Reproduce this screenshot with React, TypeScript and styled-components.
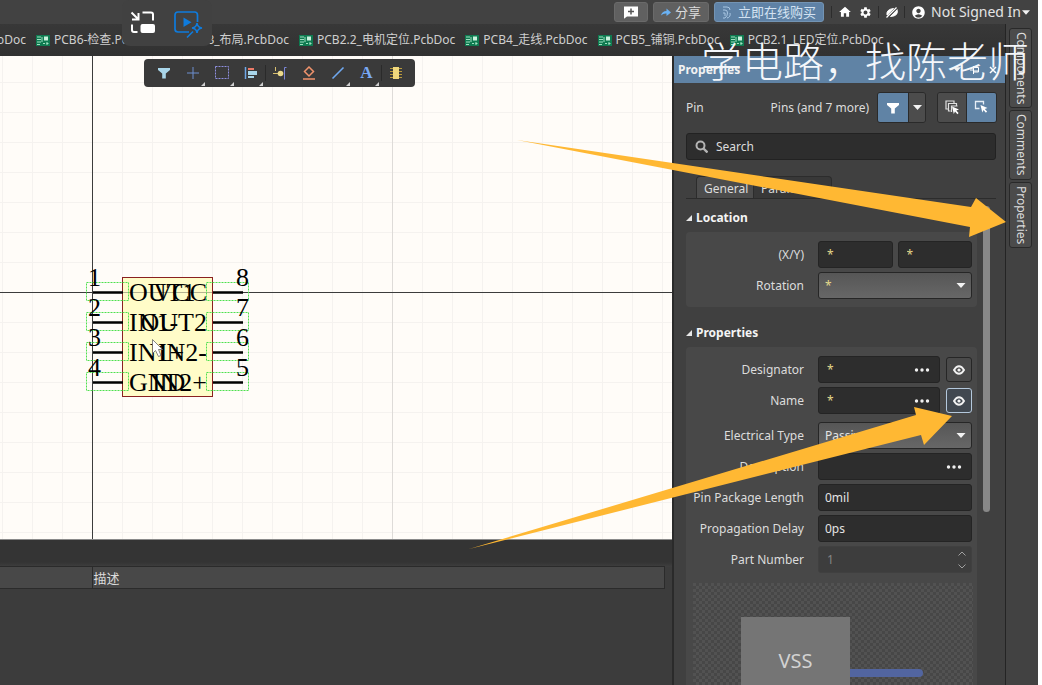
import React from "react";
import styled, { createGlobalStyle, css } from "styled-components";
import { MdHome, MdSettings, MdAccountCircle } from "react-icons/md";

const Global = createGlobalStyle`
  * { box-sizing: border-box; }
  body { margin: 0; background: #fff; }
  body, button, input, select {
    font-family: "Noto Sans", "Noto Sans CJK SC", sans-serif;
    font-size: 12px;
    line-height: 16px;
    color: #dcdcdc;
  }
  button { cursor: pointer; }
`;

/* ---------- window ---------- */

const Window = styled.div`
  position: relative;
  display: flex;
  flex-direction: column;
  height: 100vh;
  overflow: hidden;
  border-right: 4px solid #fff;
  background: #3f3f3f;
`;

const TitleBar = styled.header`
  display: flex;
  flex: none;
  justify-content: flex-end;
  align-items: center;
  gap: 5px;
  height: 24px;
  padding-right: 8px;
  background: #424242;
`;

const TitleButton = styled.button<{ $accent?: boolean }>`
  display: flex;
  align-items: center;
  justify-content: center;
  gap: 4px;
  height: 20px;
  padding: 0 7px;
  border: 1px solid ${(p) => (p.$accent ? "#7394b4" : "#6a6a6a")};
  border-radius: 3px;
  background: ${(p) => (p.$accent ? "#5f82a6" : "#606060")};
  color: ${(p) => (p.$accent ? "#d3e2f2" : "#dcdcdc")};
  font-size: 13px;
  white-space: nowrap;
`;

const CommentButton = styled(TitleButton)`
  width: 34px;
`;

const TitleTools = styled.div`
  display: flex;
  align-items: center;
  height: 20px;
`;

const TitleTool = styled.button`
  display: grid;
  place-items: center;
  width: 21px;
  height: 20px;
  padding: 0;
  border: 0;
  background: none;
  color: #fff;
`;

const TitleDivider = styled.span`
  width: 1px;
  height: 12px;
  margin: 0 2px;
  background: #2c2c2c;
`;

const Account = styled.button`
  display: flex;
  align-items: center;
  gap: 5px;
  padding: 0 0 0 4px;
  border: 0;
  background: none;
  font-size: 14px;
  color: #e4e4e4;
  white-space: nowrap;
`;

const AccountName = styled.span`
  display: flex;
  align-items: center;
  gap: 1px;
`;

const Workspace = styled.div`
  display: flex;
  flex: 1;
  min-height: 0;
`;

const Desk = styled.div`
  display: flex;
  flex: 1;
  flex-direction: column;
  min-width: 0;
`;

const DocTabs = styled.nav`
  display: flex;
  flex: none;
  align-items: center;
  gap: 10px;
  height: 32px;
  overflow: hidden;
  background: linear-gradient(#383838, #313131);
`;

const DocTab = styled.button<{ $cut?: boolean }>`
  display: flex;
  flex: none;
  align-items: center;
  gap: 4px;
  padding: 0;
  border: 0;
  background: none;
  color: #cfcfcf;
  white-space: nowrap;
  ${(p) =>
    p.$cut &&
    css`
      width: 26px;
      justify-content: flex-end;
      overflow: hidden;
    `}
`;

const DeskBody = styled.div`
  display: flex;
  flex: 1;
  min-height: 0;
`;

const Editor = styled.main`
  display: flex;
  flex: 1;
  flex-direction: column;
  min-width: 0;
`;

/* ---------- schematic ---------- */

const Sheet = styled.section`
  position: relative;
  flex: 1;
  min-height: 0;
  overflow: hidden;
  background: #fffcf8;
`;

const Drawing = styled.svg`
  display: block;
  width: 100%;
  height: 100%;
`;

const ToolStrip = styled.div`
  position: absolute;
  top: 3px;
  left: 144px;
  display: flex;
  height: 28px;
  padding: 0 5px;
  border-radius: 4px;
  background: #3a3a3a;
`;

const Tool = styled.button<{ $menu?: boolean; $ruled?: boolean }>`
  position: relative;
  display: grid;
  place-items: center;
  width: 29px;
  height: 28px;
  padding: 0;
  border: 0;
  background: none;
  ${(p) =>
    p.$ruled &&
    css`
      &::before {
        content: "";
        position: absolute;
        left: 0;
        top: 6px;
        width: 1px;
        height: 16px;
        background: #2a2a2a;
      }
    `}
  ${(p) =>
    p.$menu &&
    css`
      &::after {
        content: "";
        position: absolute;
        right: 2px;
        bottom: 1px;
        border: 2px solid transparent;
        border-right-color: #d0d0d0;
        border-bottom-color: #d0d0d0;
      }
    `}
`;

/* ---------- lower pane ---------- */

const LowerPane = styled.section`
  flex: none;
  height: 146px;
  padding: 26px 7px 0 0;
  background: linear-gradient(#343434 0 22px, #3f3f3f 27px, #3c3c3c 27px);
  border-top: 1px solid #8a8a8a;
`;

const ResultTable = styled.table`
  width: 100%;
  border-collapse: collapse;
  table-layout: fixed;
`;

const HeadCell = styled.th<{ $width?: number }>`
  width: ${(p) => (p.$width ? `${p.$width}px` : "auto")};
  height: 22px;
  padding: 0 1px;
  border: 1px solid #2b2b2b;
  border-left: 0;
  background: #484848;
  font-size: 13px;
  font-weight: 400;
  text-align: left;
`;

/* ---------- properties panel ---------- */

const Panel = styled.aside`
  display: flex;
  flex: none;
  flex-direction: column;
  width: 333px;
  overflow: hidden;
  border-left: 2px solid #2a2a2a;
  background: #404040;
`;

const PanelTitle = styled.header`
  display: flex;
  flex: none;
  align-items: center;
  justify-content: space-between;
  height: 27px;
  padding: 0 6px 0 4px;
  background: #6083a5;
`;

const PanelName = styled.h1`
  margin: 0;
  font-size: 12px;
  font-weight: 700;
  color: #f2f2f2;
`;

const PanelControls = styled.div`
  display: flex;
  gap: 6px;
`;

const PanelControl = styled.button`
  display: grid;
  place-items: center;
  width: 12px;
  height: 12px;
  padding: 0;
  border: 0;
  background: none;
  color: #fff;
`;

const FilterRow = styled.div`
  display: flex;
  flex: none;
  align-items: center;
  margin: 9px 8px 0 12px;
`;

const Scope = styled.span`
  flex: 1;
`;

const ButtonPair = styled.div`
  display: flex;
  height: 31px;
  margin-left: 8px;
  overflow: hidden;
  border: 1px solid #2a2a2a;
  border-radius: 3px;
  & + & {
    margin-left: 11px;
  }
`;

const PairButton = styled.button<{ $on?: boolean; $narrow?: boolean }>`
  display: grid;
  place-items: center;
  width: ${(p) => (p.$narrow ? 17 : p.$on ? 30 : 28)}px;
  padding: 0;
  border: 0;
  background: ${(p) => (p.$on ? "#6083a5" : "#4c4c4c")};
  & + & {
    border-left: 1px solid #2a2a2a;
  }
`;

const SearchBox = styled.label`
  display: flex;
  flex: none;
  align-items: center;
  gap: 8px;
  height: 27px;
  margin: 10px 9px 0 12px;
  padding: 0 8px;
  border: 1px solid #222;
  border-radius: 3px;
  background: #2d2d2d;
`;

const SearchInput = styled.input`
  flex: 1;
  min-width: 0;
  padding: 0;
  border: 0;
  outline: 0;
  background: none;
  &::placeholder {
    color: #dcdcdc;
    opacity: 1;
  }
`;

const PageTabs = styled.div`
  display: flex;
  flex: none;
  height: 23px;
  margin: 16px 9px 0 12px;
  padding-left: 10px;
  border-bottom: 1px solid #2c2c2c;
`;

const PageTab = styled.button<{ $active?: boolean }>`
  width: ${(p) => (p.$active ? 58 : 78)}px;
  padding: 2px 7px 0;
  border: 1px solid #2c2c2c;
  border-bottom: 0;
  border-radius: ${(p) => (p.$active ? "4px 0 0 0" : "0 4px 0 0")};
  background: ${(p) => (p.$active ? "#4c4c4c" : "#383838")};
  text-align: left;
  & + & {
    border-left: 0;
  }
`;

const ScrollArea = styled.div`
  display: flex;
  flex: 1;
  gap: 6px;
  min-height: 0;
  padding: 0 15px 0 12px;
`;

const Sections = styled.div`
  flex: 1;
  min-width: 0;
`;

const ScrollThumb = styled.div`
  width: 7px;
  height: 306px;
  margin-top: 7px;
  border-radius: 4px;
  background: #888;
`;

const SectionTitle = styled.h2`
  display: flex;
  align-items: center;
  gap: 4px;
  height: 16px;
  margin: 11px 0 6px;
  font-size: 12px;
  font-weight: 700;
  color: #f4f4f4;
`;

const Group = styled.div`
  display: flex;
  flex-direction: column;
  gap: 4px;
  padding: 9px 5px 8px 0;
  margin-bottom: 18px;
  border-radius: 4px;
  background: #484848;
`;

const Row = styled.div<{ $spaced?: boolean }>`
  display: flex;
  align-items: center;
  gap: 14px;
  height: 27px;
  margin-top: ${(p) => (p.$spaced ? 4 : 0)}px;
`;

const RowLabel = styled.label`
  width: 118px;
  text-align: right;
  white-space: nowrap;
`;

const Fields = styled.div`
  display: flex;
  flex: 1;
  gap: 5px;
  min-width: 0;
`;

const Well = styled.div<{ $off?: boolean }>`
  display: flex;
  flex: 1;
  align-items: center;
  min-width: 0;
  height: 27px;
  padding: 0 9px 0 6px;
  border: 1px solid ${(p) => (p.$off ? "#404040" : "#242424")};
  border-radius: 3px;
  background: ${(p) => (p.$off ? "#3d3d3d" : "#2d2d2d")};
`;

const Entry = styled.input<{ $mixed?: boolean }>`
  flex: 1;
  width: 20px;
  min-width: 0;
  padding: 0 0 0 ${(p) => (p.$mixed ? 2 : 0)}px;
  border: 0;
  outline: 0;
  background: none;
  color: ${(p) => (p.$mixed ? "#e3d98c" : "#e4e4e4")};
  &:disabled {
    color: #858585;
  }
`;

const MoreButton = styled.button`
  display: grid;
  place-items: center;
  width: 16px;
  height: 16px;
  padding: 0;
  border: 0;
  background: none;
`;

const EyeButton = styled.button<{ $focus?: boolean }>`
  display: grid;
  place-items: center;
  width: 26px;
  height: 25px;
  margin: 1px 0 1px 1px;
  padding: 0;
  border: 1px solid ${(p) => (p.$focus ? "#b4c8dc" : "#262626")};
  border-radius: 3px;
  background: ${(p) => (p.$focus ? "#414850" : "#4a4a4a")};
`;

const PickWrap = styled.div`
  display: grid;
  flex: 1;
  align-items: center;
  & > * {
    grid-area: 1 / 1;
  }
  & > svg {
    justify-self: end;
    margin-right: 6px;
    pointer-events: none;
  }
`;

const Pick = styled.select<{ $mixed?: boolean }>`
  width: 100%;
  height: 27px;
  padding: 0 6px;
  appearance: none;
  border: 1px solid #262626;
  border-radius: 3px;
  background: linear-gradient(#565656, #676767);
  color: ${(p) => (p.$mixed ? "#e3d98c" : "#e4e4e4")};
`;

const Spinner = styled.div`
  display: flex;
  flex-direction: column;
  gap: 4px;
  margin-right: -5px;
`;

const SpinButton = styled.button`
  display: grid;
  width: 10px;
  height: 9px;
  padding: 0;
  place-items: center;
  border: 0;
  background: none;
`;

const Preview = styled.div`
  display: flex;
  height: 140px;
  margin: 6px -1px 0 7px;
  padding: 34px 48px 0;
  background: repeating-conic-gradient(#474747 0 25%, #525252 0 50%) 0 0 / 6px 6px;
`;

const PreviewBody = styled.div`
  display: grid;
  place-items: center;
  width: 109px;
  height: 88px;
  background: #757575;
  font-size: 20px;
  color: #d2d2d2;
`;

const PreviewPin = styled.div`
  width: 73px;
  height: 8px;
  margin-top: 52px;
  border-radius: 0 4px 4px 0;
  background: #5265a0;
`;

/* ---------- side dock ---------- */

const Dock = styled.nav`
  display: flex;
  flex: none;
  flex-direction: column;
  gap: 2px;
  align-items: flex-start;
  width: 33px;
  padding: 4px 0 0 3px;
  border-left: 1px solid #242424;
  background: #424242;
`;

const DockTab = styled.button`
  width: 23px;
  padding: 3px 2px;
  border: 1px solid #292929;
  border-radius: 3px;
  background: #4b4b4b;
  writing-mode: vertical-rl;
  white-space: nowrap;
`;

/* ---------- overlays ---------- */

const CaptureWidget = styled.div`
  position: absolute;
  top: 0;
  left: 122px;
  display: flex;
  gap: 13px;
  height: 46px;
  padding: 9px 9px 0 8px;
  border-radius: 8px;
  background: #414141;
`;

const CaptureButton = styled.button`
  width: 30px;
  height: 30px;
  padding: 0;
  border: 0;
  background: none;
`;

const Caption = styled.p`
  position: absolute;
  top: 31px;
  right: 9px;
  margin: 0;
  font-family: "Noto Sans CJK SC", sans-serif;
  font-size: 41px;
  font-weight: 300;
  line-height: 56px;
  color: #f4f6fa;
  white-space: nowrap;
  pointer-events: none;
`;

const Pointers = styled.svg`
  position: absolute;
  top: 0;
  right: 0;
  pointer-events: none;
`;

/* ---------- icons ---------- */

const BoardIcon = () => (
  <svg width="14" height="11" viewBox="0 0 14 11">
    <rect width="14" height="11" fill="#0f7a50" />
    <path d="M1 2h4M1 4.500h4M1 7h4M1 9.500h3" stroke="#9fe0c0" strokeWidth="1" />
    <rect x="8" y="1.500" width="4" height="4" fill="#c8f0dc" />
    <path d="M6 2v5M7 8.500h2M10.500 8.500h2M11 7v3" stroke="#9fe0c0" />
  </svg>
);

const Funnel = ({ color = "#fff" }: { color?: string }) => (
  <svg width="14" height="12" viewBox="0 0 14 12">
    <path d="M1 1h12v2L8.800 6.500V11.500H5.200V6.500L1 3z" fill={color} />
  </svg>
);

const Caret = ({ width = 9 }: { width?: number }) => (
  <svg width={width} height="5" viewBox="0 0 9 5">
    <path d="M0 0h9L4.500 5z" fill="#f2f2f2" />
  </svg>
);

const Dots = () => (
  <svg width="16" height="4" viewBox="0 0 16 4">
    <circle cx="2.500" cy="2" r="1.700" fill="#f0f0f0" />
    <circle cx="8" cy="2" r="1.700" fill="#f0f0f0" />
    <circle cx="13.500" cy="2" r="1.700" fill="#f0f0f0" />
  </svg>
);

const Eye = () => (
  <svg width="12" height="10" viewBox="0 0 12 10">
    <path d="M1 5Q3.200 1.200 6 1.200T11 5Q8.800 8.800 6 8.800T1 5z" fill="none" stroke="#f2f2f2" strokeWidth="1.900" />
    <circle cx="6" cy="5" r="1.600" fill="#f2f2f2" />
  </svg>
);

const Fold = () => (
  <svg width="6" height="6" viewBox="0 0 6 6">
    <path d="M6 0v6H0z" fill="#e8e8e8" />
  </svg>
);

const Letter = styled.span`
  font-family: "Liberation Serif", serif;
  font-size: 17px;
  font-weight: 700;
  line-height: 18px;
  color: #78a8f4;
`;

const toolIcons: { name: string; menu?: boolean; ruled?: boolean; icon: React.ReactNode }[] = [
  { name: "Filter", icon: <Funnel color="#a9d6ea" /> },
  {
    name: "Move",
    menu: true,
    icon: (
      <svg width="14" height="14" viewBox="0 0 14 14">
        <path d="M7 1v12M1 7h12" stroke="#6d8fd0" />
      </svg>
    ),
  },
  {
    name: "Select area",
    menu: true,
    icon: (
      <svg width="16" height="16" viewBox="0 0 16 16">
        <rect x="1.500" y="1.500" width="13" height="12" fill="none" stroke="#8e8fe0" strokeDasharray="2 1" />
      </svg>
    ),
  },
  {
    name: "Align",
    menu: true,
    icon: (
      <svg width="14" height="14" viewBox="0 0 14 14">
        <path d="M1.500 1v12" stroke="#6fa8e8" strokeWidth="1.500" />
        <rect x="4" y="2" width="6" height="2" fill="#ec7a68" />
        <rect x="4" y="5" width="9" height="4" fill="#a9d6ea" />
        <rect x="4" y="10" width="6" height="2" fill="#a9d6ea" />
      </svg>
    ),
  },
  {
    name: "Place pin",
    ruled: true,
    icon: (
      <svg width="16" height="14" viewBox="0 0 16 14">
        <path d="M1 7.500h7M3.500 1v4" stroke="#d8c070" />
        <circle cx="8.500" cy="7.500" r="2.800" fill="#ecd98a" />
        <path d="M14.500 1.500h-2v12" fill="none" stroke="#7b86d8" />
      </svg>
    ),
  },
  {
    name: "Place directive",
    icon: (
      <svg width="14" height="14" viewBox="0 0 14 14">
        <path d="M7 1l4.500 4.500L7 10 2.500 5.500zM1 13h12" fill="none" stroke="#f0936c" strokeWidth="1.500" />
      </svg>
    ),
  },
  {
    name: "Place line",
    menu: true,
    icon: (
      <svg width="14" height="14" viewBox="0 0 14 14">
        <path d="M1.500 12.500l11-11" stroke="#6fa8f0" strokeWidth="1.600" />
      </svg>
    ),
  },
  { name: "Place text", menu: true, icon: <Letter>A</Letter> },
  {
    name: "Place part",
    ruled: true,
    icon: (
      <svg width="14" height="14" viewBox="0 0 14 14">
        <path d="M1 2.500h12M1 5.500h12M1 8.500h12M1 11.500h12" stroke="#b99a3c" />
        <rect x="4" y="1" width="6" height="12" fill="#f0d87c" />
      </svg>
    ),
  },
];

/* ---------- data ---------- */

const docs = ["PCB6-检查.PcbDoc", "PCB3_布局.PcbDoc", "PCB2.2_电机定位.PcbDoc", "PCB4_走线.PcbDoc", "PCB5_铺铜.PcbDoc", "PCB2.1_LED定位.PcbDoc"];

const pins = [
  { y: 236, left: "OUT1", right: "VCC", a: "1", b: "8" },
  { y: 266, left: "IN1-", right: "OUT2", a: "2", b: "7" },
  { y: 296, left: "IN1+", right: "IN2-", a: "3", b: "6" },
  { y: 326, left: "GND", right: "IN2+", a: "4", b: "5" },
];

function Schematic() {
  return (
    <Drawing fontFamily='"Liberation Serif", serif' fontSize="26" fill="#000">
      <defs>
        <pattern id="grid" x="92" y="236" width="30" height="30" patternUnits="userSpaceOnUse">
          <path d="M.5 0v30M0 .5h30" stroke="#f5f2ef" />
        </pattern>
      </defs>
      <rect width="100%" height="100%" fill="url(#grid)" />
      <path d="M392.500 0v600" stroke="#dedbd8" />
      <rect x="122.500" y="221.500" width="90" height="119" fill="#fffcc8" stroke="#8a2020" />
      <path d="M92.500 0v600M0 236.500h122M213 236.500h600" stroke="#3c3c3c" />
      <path d="M123 236.500h89" stroke="#b5b290" />
      {pins.map((p) => (
        <g key={p.a}>
          <path d={`M93 ${p.y + 0.5}h30M213 ${p.y + 0.5}h30`} stroke="#000" strokeWidth="2.500" />
          <g fill="none" stroke="#4ee04e" strokeDasharray="2 1">
            <rect x="86.500" y={p.y - 9.5} width="42" height="18" />
            <rect x="206.500" y={p.y - 9.5} width="42" height="18" />
          </g>
          <text x="88" y={p.y - 6}>{p.a}</text>
          <text x="236" y={p.y - 6}>{p.b}</text>
          <text x="129" y={p.y + 9}>{p.left}</text>
          <text x="207" y={p.y + 9} textAnchor="end">{p.right}</text>
        </g>
      ))}
      <path d="M152.500 283.500v14l3-3 3 6 2.500-1-2.500-6h4z" fill="#fff" stroke="#666" strokeWidth=".8" />
    </Drawing>
  );
}

function Visible({ id, label, focus }: { id: string; label: string; focus?: boolean }) {
  return (
    <Row>
      <RowLabel htmlFor={id}>{label}</RowLabel>
      <Fields>
        <Well>
          <Entry id={id} $mixed defaultValue="*" />
          <MoreButton aria-label={`Edit ${label}`}>
            <Dots />
          </MoreButton>
        </Well>
        <EyeButton $focus={focus} aria-label={`Show ${label}`}>
          <Eye />
        </EyeButton>
      </Fields>
    </Row>
  );
}

function TextRow({ id, label, value, more }: { id: string; label: string; value: string; more?: boolean }) {
  return (
    <Row>
      <RowLabel htmlFor={id}>{label}</RowLabel>
      <Well>
        <Entry id={id} defaultValue={value} />
        {more && (
          <MoreButton aria-label={`Edit ${label}`}>
            <Dots />
          </MoreButton>
        )}
      </Well>
    </Row>
  );
}

function PickRow({ id, label, value, mixed, spaced }: { id: string; label: string; value: string; mixed?: boolean; spaced?: boolean }) {
  return (
    <Row $spaced={spaced}>
      <RowLabel htmlFor={id}>{label}</RowLabel>
      <PickWrap>
        <Pick id={id} $mixed={mixed}>
          <option>{value}</option>
        </Pick>
        <Caret width={10} />
      </PickWrap>
    </Row>
  );
}

function PropertiesPanel() {
  return (
    <Panel>
      <PanelTitle>
        <PanelName>Properties</PanelName>
        <PanelControls>
          <PanelControl aria-label="Menu">
            <Caret width={8} />
          </PanelControl>
          <PanelControl aria-label="Pin panel">
            <svg width="10" height="8" viewBox="0 0 10 8">
              <path d="M0 4h3M3.500 0v8M3.500 1.500h5v4.500h-5M3.500 5h5" fill="none" stroke="#fff" />
            </svg>
          </PanelControl>
          <PanelControl aria-label="Close">
            <svg width="8" height="8" viewBox="0 0 8 8">
              <path d="M1 1l6 6M7 1L1 7" stroke="#fff" strokeWidth="1.500" />
            </svg>
          </PanelControl>
        </PanelControls>
      </PanelTitle>
      <FilterRow>
        <Scope>Pin</Scope>
        <span>Pins (and 7 more)</span>
        <ButtonPair>
          <PairButton $on aria-label="Filter">
            <Funnel />
          </PairButton>
          <PairButton $narrow aria-label="Filter options">
            <Caret />
          </PairButton>
        </ButtonPair>
        <ButtonPair>
          <PairButton aria-label="Select all">
            <svg width="15" height="15" viewBox="0 0 15 15">
              <path d="M3 9H1V1h8v2M5.500 11H3.500V3.500h8v2M6.500 12V6h6" fill="none" stroke="#e0e0e0" strokeWidth="1.200" />
              <path d="M7 6.500l7 3-2.700.9L13.600 13l-1.200 1.200-2.400-2.600L8.800 14z" fill="#fff" />
            </svg>
          </PairButton>
          <PairButton $on aria-label="Select only">
            <svg width="15" height="15" viewBox="0 0 15 15">
              <path d="M5.500 8.500H1.500v-7h8v3" fill="none" stroke="#e6eef6" strokeWidth="1.300" />
              <path d="M6.500 5l7 3-2.700.9 2.300 2.600-1.200 1.200-2.400-2.600-1.200 2.400z" fill="#fff" />
            </svg>
          </PairButton>
        </ButtonPair>
      </FilterRow>
      <SearchBox>
        <svg width="13" height="13" viewBox="0 0 13 13">
          <circle cx="5.500" cy="5.500" r="4" fill="none" stroke="#b4b4b4" strokeWidth="2" />
          <path d="M8.500 8.500l4 4" stroke="#b4b4b4" strokeWidth="2.400" />
        </svg>
        <SearchInput placeholder="Search" aria-label="Search" />
      </SearchBox>
      <PageTabs>
        <PageTab $active>General</PageTab>
        <PageTab>Parameters</PageTab>
      </PageTabs>
      <ScrollArea>
        <Sections>
          <SectionTitle>
            <Fold />
            Location
          </SectionTitle>
          <Group>
            <Row>
              <RowLabel htmlFor="x">(X/Y)</RowLabel>
              <Fields>
                <Well>
                  <Entry id="x" $mixed defaultValue="*" />
                </Well>
                <Well>
                  <Entry aria-label="Y" $mixed defaultValue="*" />
                </Well>
              </Fields>
            </Row>
            <PickRow id="rotation" label="Rotation" value="*" mixed />
          </Group>
          <SectionTitle>
            <Fold />
            Properties
          </SectionTitle>
          <Group>
            <Visible id="designator" label="Designator" />
            <Visible id="name" label="Name" focus />
            <PickRow id="etype" label="Electrical Type" value="Passive" spaced />
            <TextRow id="description" label="Description" value="" more />
            <TextRow id="length" label="Pin Package Length" value="0mil" />
            <TextRow id="delay" label="Propagation Delay" value="0ps" />
            <Row>
              <RowLabel htmlFor="part">Part Number</RowLabel>
              <Well $off>
                <Entry id="part" $mixed disabled defaultValue="1" />
                <Spinner>
                  <SpinButton aria-label="Increase" disabled>
                    <svg width="8" height="5" viewBox="0 0 8 5">
                      <path d="M.5 4.500L4 1l3.500 3.500" fill="none" stroke="#a0a0a0" />
                    </svg>
                  </SpinButton>
                  <SpinButton aria-label="Decrease" disabled>
                    <svg width="8" height="5" viewBox="0 0 8 5">
                      <path d="M.5.5L4 4 7.500.5" fill="none" stroke="#a0a0a0" />
                    </svg>
                  </SpinButton>
                </Spinner>
              </Well>
            </Row>
            <Preview>
              <PreviewBody>VSS</PreviewBody>
              <PreviewPin />
            </Preview>
          </Group>
        </Sections>
        <ScrollThumb />
      </ScrollArea>
    </Panel>
  );
}

export default function App() {
  return (
    <>
      <Global />
      <Window>
        <TitleBar>
          <CommentButton aria-label="Add comment">
            <svg width="16" height="13" viewBox="0 0 16 13">
              <path d="M1 .5h14v10H4L1 12.800z" fill="#fff" />
              <path d="M8 2.500v6M5 5.500h6" stroke="#555" strokeWidth="1.500" />
            </svg>
          </CommentButton>
          <TitleButton>
            <svg width="10" height="9" viewBox="0 0 10 9">
              <path d="M0 7.500Q1 3 5.500 3V.5L10 4.500 5.500 8V5.500Q2.500 5 0 7.500z" fill="#6ab2f4" />
            </svg>
            分享
          </TitleButton>
          <TitleButton $accent>
            <svg width="12" height="13" viewBox="0 0 12 13">
              <path d="M1 1h4q3 0 3 3M1 4h2q2.500 0 2.500 3t-2.500 5H1M1 7h2v3M5 12q4-1 3-5" fill="none" stroke="#a9c6e2" />
            </svg>
            立即在线购买
          </TitleButton>
          <TitleTools>
            <TitleDivider />
            <TitleTool aria-label="Home">
              <MdHome size={14} />
            </TitleTool>
            <TitleTool aria-label="Settings">
              <MdSettings size={13} />
            </TitleTool>
            <TitleDivider />
            <TitleTool aria-label="Offline">
              <svg width="12" height="11" viewBox="0 0 12 11">
                <path d="M1 8Q0 2.500 7.500 1.500L1.500 8zM4.500 9.500L11 2.500Q13 9 4.500 9.500z" fill="#fff" stroke="#fff" />
                <path d="M.5 10.500L10.500.5" stroke="#fff" strokeWidth="1.200" />
                <path d="M2.300 10.500L12 1" stroke="#424242" strokeWidth=".8" />
              </svg>
            </TitleTool>
            <TitleDivider />
            <Account>
              <MdAccountCircle size={15} color="#fff" />
              <AccountName>
                Not Signed In
                <Caret width={8} />
              </AccountName>
            </Account>
          </TitleTools>
        </TitleBar>
        <Workspace>
          <Desk>
            <DocTabs>
              <DocTab $cut>.PcbDoc</DocTab>
              {docs.map((d) => (
                <DocTab key={d}>
                  <BoardIcon />
                  {d}
                </DocTab>
              ))}
            </DocTabs>
            <DeskBody>
              <Editor>
                <Sheet>
                  <Schematic />
                  <ToolStrip>
                    {toolIcons.map((t) => (
                      <Tool key={t.name} $menu={t.menu} $ruled={t.ruled} aria-label={t.name}>
                        {t.icon}
                      </Tool>
                    ))}
                  </ToolStrip>
                </Sheet>
                <LowerPane>
                  <ResultTable>
                    <thead>
                      <tr>
                        <HeadCell $width={92} aria-label="Item" />
                        <HeadCell>描述</HeadCell>
                      </tr>
                    </thead>
                  </ResultTable>
                </LowerPane>
              </Editor>
              <PropertiesPanel />
            </DeskBody>
          </Desk>
          <Dock>
            <DockTab>Components</DockTab>
            <DockTab>Comments</DockTab>
            <DockTab>Properties</DockTab>
          </Dock>
        </Workspace>
        <CaptureWidget>
          <CaptureButton aria-label="Picture in picture">
            <svg width="30" height="30" viewBox="0 0 30 30">
              <path d="M1.500 3.500l6.500 6.500M8.500 4v6.500H2M12.500 3.500h8.500q2 0 2 2v6M2 15.500v5.500q0 2 2 2h3.500" fill="none" stroke="#fff" strokeWidth="2" />
              <rect x="10.500" y="15" width="14.500" height="9" rx="2" fill="#fff" />
            </svg>
          </CaptureButton>
          <CaptureButton aria-label="Video tools">
            <svg width="30" height="30" viewBox="0 0 30 30">
              <path d="M24.500 13V6q0-3-3-3H5Q2 3 2 6v14q0 3 3 3h11" fill="none" stroke="#0f7bdc" strokeWidth="1.700" />
              <path d="M10.500 8.500v9.500l8-4.700z" fill="#0f7bdc" />
              <path d="M24 14q.5 4.500 5 5-4.500.5-5 5-.5-4.500-5-5 4.500-.5 5-5zM20 22.500L14 28.500" fill="#414141" stroke="#0f7bdc" strokeWidth="1.600" />
            </svg>
          </CaptureButton>
        </CaptureWidget>
        <Caption>学电路，找陈老师</Caption>
        <Pointers width="570" height="685" viewBox="468 0 570 685" fill="#ffb833">
          <path d="M517 140L971 207 976 198 1006 222 969 237 970 227z" />
          <path d="M469 549L916 415 914 407 952 416 924 445 921 435z" />
        </Pointers>
      </Window>
    </>
  );
}
